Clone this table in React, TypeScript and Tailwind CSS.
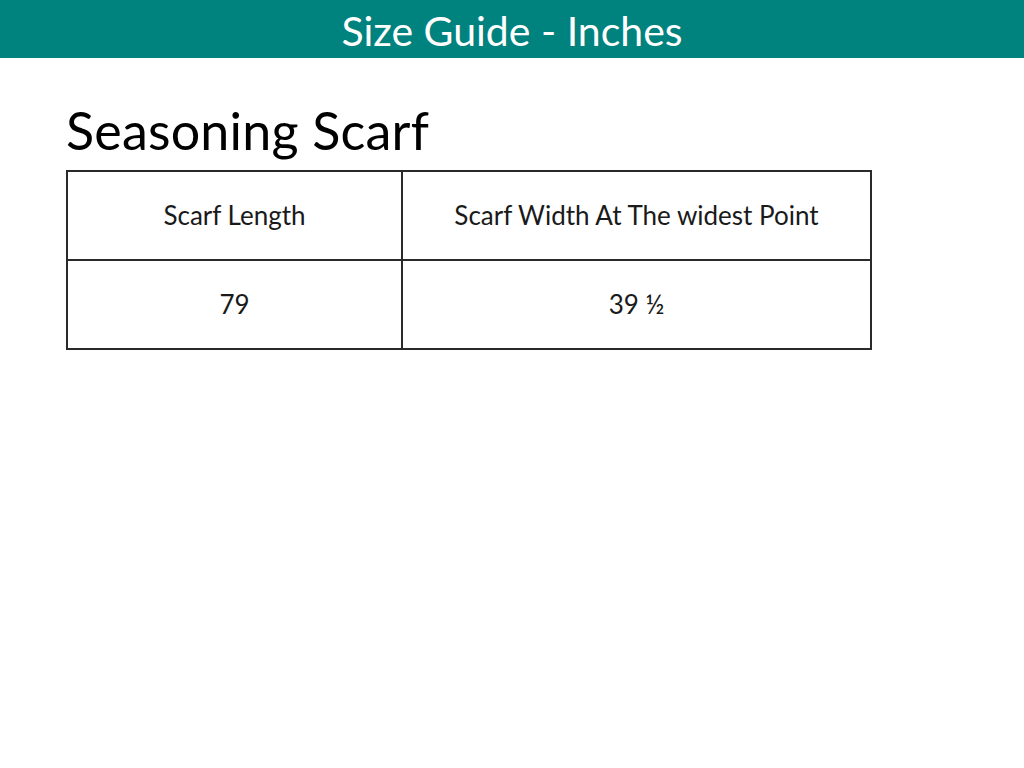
export default function App() {
	return (
		<div
			className="w-[1024px] h-[768px] bg-white text-black"
			style={{ fontFamily: 'Lato, "Noto Sans", sans-serif' }}
		>
			{/* Header */}
			<div className="h-[58px] bg-[#00827e] flex items-center justify-center">
				<h1 className="text-white text-[41px] leading-none pt-[2px]">Size Guide - Inches</h1>
			</div>

			<div className="pl-[66px] pt-[42px]">
				<h2 className="text-[52px] leading-[60px] tracking-[0.2px]">Seasoning Scarf</h2>

				{/* Table */}
				<table className="mt-[10px] border-collapse w-[806px] text-[26px] text-[#1a1a1a]">
					<tbody>
						<tr className="h-[89px]">
							<td className="w-[335px] border-2 border-[#2a2a2a] text-center align-middle">Scarf Length</td>
							<td className="border-2 border-[#2a2a2a] text-center align-middle">
								Scarf Width At The widest Point
							</td>
						</tr>
						<tr className="h-[89px]">
							<td className="border-2 border-[#2a2a2a] text-center align-middle">79</td>
							<td className="border-2 border-[#2a2a2a] text-center align-middle">39 ½</td>
						</tr>
					</tbody>
				</table>
			</div>
		</div>
	);
}
